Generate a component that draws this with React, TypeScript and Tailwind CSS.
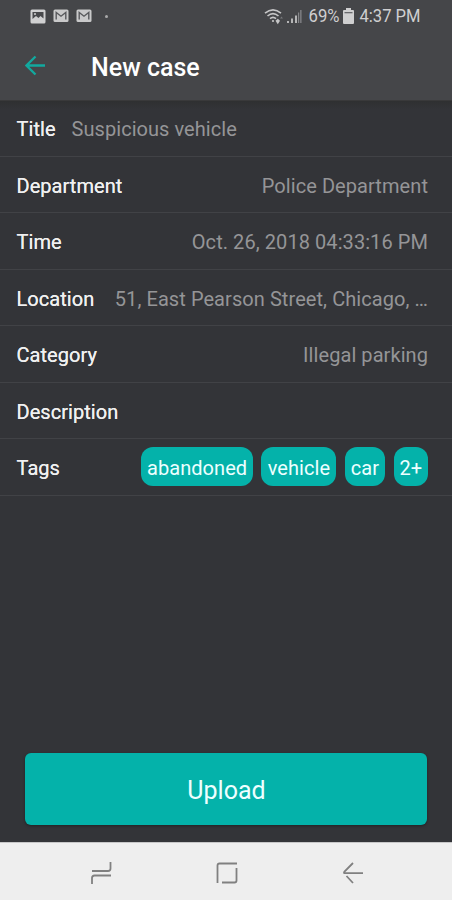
import type { ReactNode } from "react";

const tags = [
  { label: "abandoned", style: "w-[112px]" },
  { label: "vehicle", style: "w-[75px]" },
  { label: "car", style: "w-[40.5px]" },
  { label: "2+", style: "w-[34.5px]" },
];

const fields = [
  { label: "Department", value: "Police Department" },
  { label: "Time", value: "Oct. 26, 2018 04:33:16 PM" },
  { label: "Location", value: "51, East Pearson Street, Chicago, …" },
  { label: "Category", value: "Illegal parking" },
  { label: "Description", value: "" },
];

interface RowProps {
  label: string;
  children?: ReactNode;
}

function Row({ label, children }: RowProps) {
  return (
    <div className="flex h-[56.5px] items-center justify-between border-b border-[#414246] pl-[16.5px] pr-6">
      <span className="pt-[2.5px] text-[20px] tracking-[0.05px] text-[#f0f0f0] [text-shadow:0_0_0.6px_#f0f0f0]">
        {label}
      </span>
      {children}
    </div>
  );
}

function MailIcon() {
  return (
    <svg width="16" height="14" viewBox="0 0 16 14">
      <rect x="0.5" y="0.5" width="15" height="12.5" rx="1.5" fill="#c9c9ca" />
      <path
        d="M3.2 10.5V3.5L8 7.2l4.8-3.7v7"
        fill="none"
        stroke="#58595c"
        strokeWidth="1.4"
      />
    </svg>
  );
}

function StatusBar() {
  return (
    <div className="flex h-8 items-center justify-between pl-[30px] pr-[27px]">
      <div className="flex items-center gap-[7px]">
        <svg width="16" height="15" viewBox="0 0 16 15">
          <rect x="0.5" y="0.5" width="15" height="14" rx="1.5" fill="#d0d0d1" />
          <path d="M2.5 3h11v6.5l-3-2.5-2 2-2.5-2-3.5 3z" fill="#48494c" />
          <circle cx="5" cy="5" r="1" fill="#d0d0d1" />
        </svg>
        <MailIcon />
        <MailIcon />
        <span className="ml-[6px] h-[3px] w-[3px] rounded-full bg-[#a9a9aa]" />
      </div>
      <div className="flex items-center">
        <svg width="20" height="17" viewBox="0 0 20 17" fill="none">
          <g stroke="#c6c6c7" strokeWidth="1.6">
            <path d="M1 5.2Q9 -1.5 17 5.2" />
            <path d="M3.5 8Q9 3.2 14.5 8" />
            <path d="M6 10.7Q9 8 12 10.7" />
          </g>
          <circle cx="9" cy="13" r="1.1" fill="#c6c6c7" />
          <path d="M11.5 12.7h4.5l-2.2 3.5zM11.5 12.7l2.3-2 2.2 2z" fill="#c6c6c7" />
          <path d="M16 10.5h3l-1.5-2z" fill="#77787b" />
        </svg>
        <svg className="ml-[3px]" width="15" height="14" viewBox="0 0 15 14">
          <path d="M0 12h2v2H0zM4 9.5h2V14H4zM8 6.5h2V14H8z" fill="#b5b5b6" />
          <path d="M11 3.5h1.2V14H11zM13.2 1h1.3v13h-1.3z" fill="#858689" />
        </svg>
        <svg
          className="ml-[5px] overflow-visible"
          width="118"
          height="28"
          viewBox="0 0 118 28"
          fill="#cfcfd0"
          fontFamily="Roboto, sans-serif"
          fontSize="18"
        >
          <text x="1.5" y="20" textLength="31" lengthAdjust="spacingAndGlyphs">
            69%
          </text>
          <path d="M39 6h5v2h2q1 0 1 1v12q0 1-1 1h-9q-1 0-1-1V9q0-1 1-1h2z" />
          <path d="M37.5 10h8v1.3h-8z" fill="#68696c" />
          <text x="52.5" y="20" textLength="61" lengthAdjust="spacingAndGlyphs">
            4:37 PM
          </text>
        </svg>
      </div>
    </div>
  );
}

function Header() {
  return (
    <header className="h-[101px] border-b border-[#39393a] bg-[#454649]">
      <StatusBar />
      <div className="flex h-[68px] items-center pl-[25px]">
        <svg
          className="-mt-[2px]"
          width="21"
          height="21"
          viewBox="0 0 21 21"
          fill="none"
          stroke="#12a99f"
          strokeWidth="2.3"
        >
          <path d="M20 10.5H2M10.5 1.5l-9 9 9 9" />
        </svg>
        <h1 className="ml-[45px] pt-[2px] text-[25px] font-medium leading-none text-white">
          New case
        </h1>
      </div>
    </header>
  );
}

function NavigationBar() {
  return (
    <nav className="flex h-[58px] items-center justify-between border-t border-[#c7c7c8] bg-[#eeeeee] pl-[91px] pr-[89px] pt-[3px]">
      <svg
        width="21"
        height="24"
        viewBox="0 0 21 24"
        fill="none"
        stroke="#808080"
        strokeWidth="1.8"
      >
        <path d="M1 10h16q2.5 0 2.5-2.5V1M20 14.5H3.5Q1 14.5 1 17v6" />
      </svg>
      <svg
        className="-ml-[2px]"
        width="22"
        height="22"
        viewBox="0 0 22 22"
        fill="none"
        stroke="#808080"
        strokeWidth="1.8"
      >
        <path d="M1.5 21V3.5q0-2 2-2H21M20.5 6v12.5q0 2-2 2H6" />
      </svg>
      <svg
        width="20"
        height="22"
        viewBox="0 0 20 22"
        fill="none"
        stroke="#808080"
        strokeWidth="1.8"
      >
        <path d="M10 1L1.5 9.5q-1 1.5 0 1.7H20M3.5 14l6.5 7" />
      </svg>
    </nav>
  );
}

export default function App() {
  return (
    <div className="flex h-[900px] w-[452px] flex-col overflow-hidden bg-[#333438] font-[Roboto,sans-serif]">
      <Header />
      <main className="flex flex-1 flex-col">
        <div className="flex h-[55.5px] items-center gap-4 border-b border-[#414246] bg-linear-to-b from-[#2f3031] to-[#333438] to-15% pl-[16.5px] pt-px text-[20px]">
          <span className="tracking-[0.05px] text-[#f0f0f0] [text-shadow:0_0_0.6px_#f0f0f0]">
            Title
          </span>
          <span className="tracking-[0.05px] text-[#959597]">
            Suspicious vehicle
          </span>
        </div>
        {fields.map((field) => (
          <Row key={field.label} label={field.label}>
            <span className="whitespace-nowrap pt-[2.5px] text-[20px] tracking-[0.07px] text-[#959597]">
              {field.value}
            </span>
          </Row>
        ))}
        <Row label="Tags">
          <div className="flex gap-[8.3px]">
            {tags.map((tag) => (
              <span
                key={tag.label}
                className={`flex h-[39px] items-center justify-center rounded-[12px] bg-[#04b2aa] pt-[2px] text-[20px] tracking-[0.05px] text-[#edffff] ${tag.style}`}
              >
                {tag.label}
              </span>
            ))}
          </div>
        </Row>
        <div className="mt-auto px-[25px] pb-[17px]">
          <button className="h-[72px] w-full rounded-[6px] bg-[#04b2aa] pl-[1px] pt-1 text-[25px] text-[#edffff] shadow-[0_1px_3px_rgba(0,0,0,0.35)]">
            Upload
          </button>
        </div>
      </main>
      <NavigationBar />
    </div>
  );
}
